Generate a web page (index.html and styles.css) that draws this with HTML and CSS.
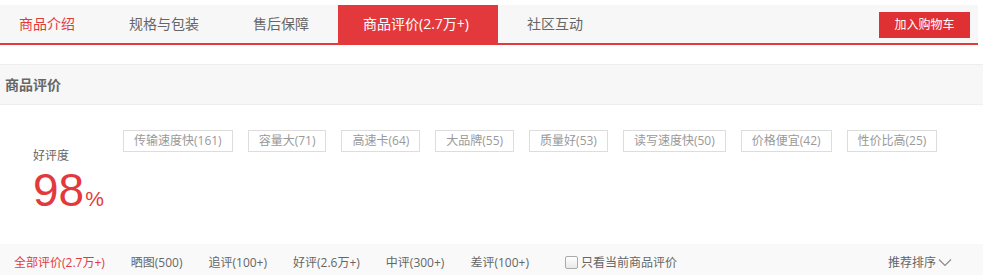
FILE: index.html
```html
<!DOCTYPE html>
<html lang="zh-CN">
<head>
<meta charset="utf-8">
<link rel="stylesheet" href="styles.css">
</head>
<body>
<div class="page">
  <div class="tabbar">
    <ul class="tabs">
      <li class="tab first">商品介绍</li>
      <li class="tab">规格与包装</li>
      <li class="tab">售后保障</li>
      <li class="tab active">商品评价(2.7万+)</li>
      <li class="tab">社区互动</li>
    </ul>
    <a class="cart-btn">加入购物车</a>
  </div>

  <div class="section-head">商品评价</div>

  <div class="summary">
    <div class="rate">
      <div class="rate-label">好评度</div>
      <div class="rate-value">98<span class="pct">%</span></div>
    </div>
    <ul class="tags">
      <li class="tag">传输速度快(161)</li>
      <li class="tag">容量大(71)</li>
      <li class="tag">高速卡(64)</li>
      <li class="tag">大品牌(55)</li>
      <li class="tag">质量好(53)</li>
      <li class="tag">读写速度快(50)</li>
      <li class="tag">价格便宜(42)</li>
      <li class="tag">性价比高(25)</li>
    </ul>
  </div>

  <div class="filter">
    <ul class="filter-list">
      <li class="filter-item current">全部评价(2.7万+)</li>
      <li class="filter-item">晒图(500)</li>
      <li class="filter-item">追评(100+)</li>
      <li class="filter-item">好评(2.6万+)</li>
      <li class="filter-item">中评(300+)</li>
      <li class="filter-item">差评(100+)</li>
      <li class="filter-item check"><span class="box"></span>只看当前商品评价</li>
    </ul>
    <div class="sort">推荐排序<svg class="chev" width="14" height="9" viewBox="0 0 14 9"><path d="M1 1.5 L7 7.5 L13 1.5" fill="none" stroke="#888" stroke-width="1.1"/></svg></div>
  </div>
</div>
</body>
</html>
```

FILE: styles.css
```css
* { box-sizing: border-box; }
html, body { margin: 0; padding: 0; background: #fff; }
body {
  font-family: "Open Sans", "Noto Sans CJK SC", sans-serif;
  color: #666;
  font-size: 12px;
}
ul { list-style: none; margin: 0; padding: 0; }

.page { padding-top: 5px; width: 983px; overflow: hidden; }

.tabbar {
  width: 978px;
  height: 40px;
  background: #f7f7f7;
  border-bottom: 2px solid #e4393c;
  display: flex;
  align-items: stretch;
  justify-content: space-between;
}
.tabs { display: flex; gap: 4px; }
.tab {
  padding: 0 25px;
  line-height: 38px;
  font-size: 14px;
  color: #666;
  white-space: nowrap;
}
.tab.first { padding-left: 19px; color: #e4393c; }
.tab.active { background: #e4393c; color: #fff; padding-right: 29px; }

.cart-btn {
  align-self: flex-start;
  margin-top: 7px;
  margin-right: 8px;
  width: 91px;
  height: 26px;
  line-height: 26px;
  text-align: center;
  background: #df3033;
  color: #fff;
  font-size: 12px;
}

.section-head {
  margin-top: 19px;
  height: 41px;
  line-height: 39px;
  background: #f7f7f7;
  border-top: 1px solid #eee;
  border-bottom: 1px solid #eee;
  padding-left: 5px;
  font-size: 14px;
  font-weight: bold;
  color: #666;
}

.summary {
  display: flex;
  height: 139px;
  padding-top: 25px;
}
.rate { width: 123px; padding-left: 33px; padding-top: 17px; }
.rate-label { font-size: 12px; line-height: 18px; color: #666; }
.rate-value {
  color: #e4393c;
  font-family: "Liberation Sans", Arial, sans-serif;
  font-size: 46px;
  line-height: 50px;
  white-space: nowrap;
}
.pct { font-size: 21px; margin-left: 1px; }

.tags { display: flex; flex-wrap: wrap; gap: 12px 15px; align-content: flex-start; width: 850px; }
.tag {
  height: 22px;
  line-height: 20px;
  padding: 0 10px;
  border: 1px solid #ddd;
  color: #999;
  font-size: 12px;
  white-space: nowrap;
}

.filter {
  height: 36px;
  background: #f9f9f9;
  display: flex;
  align-items: center;
  justify-content: space-between;
  padding: 0 31px 0 14px;
}
.filter-list { display: flex; align-items: center; gap: 26px; }
.filter-item { font-size: 12px; color: #666; white-space: nowrap; display: flex; align-items: center; }
.filter-item.current { color: #e4393c; }
.filter-item.check { margin-left: 10px; }
.box {
  width: 13px; height: 13px;
  border: 1px solid #aaa;
  border-radius: 2px;
  background: linear-gradient(#fff, #e9e9e9);
  margin-right: 3px;
}
.sort { font-size: 12px; color: #666; display: flex; align-items: center; }
.chev { margin-left: 2px; }
```
